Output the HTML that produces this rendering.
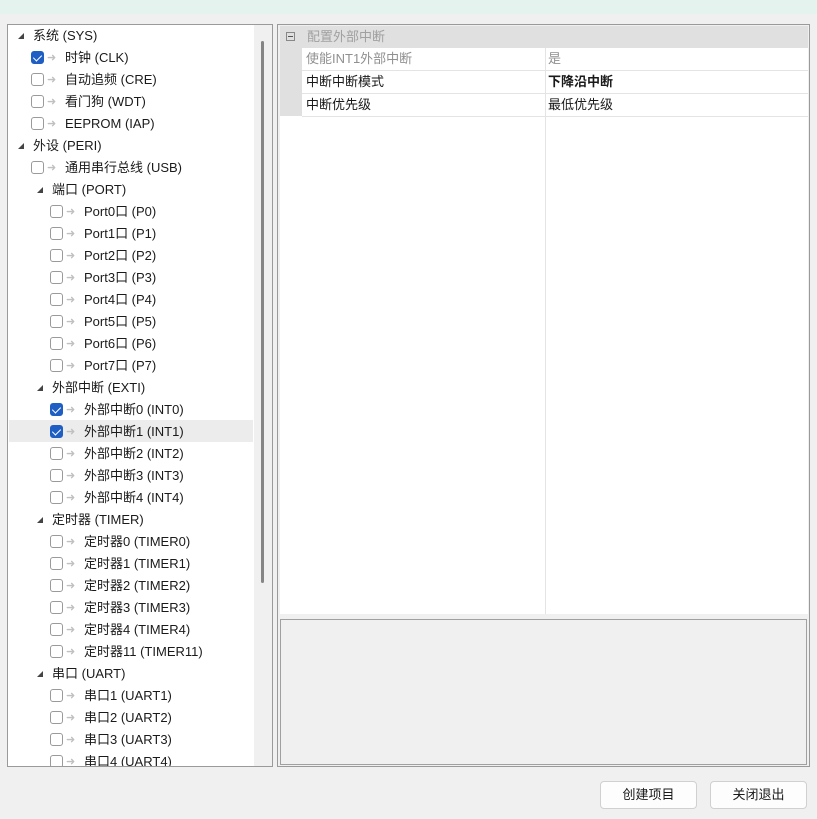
<!DOCTYPE html>
<html><head><meta charset="utf-8"><style>
*{margin:0;padding:0;box-sizing:border-box}
body{width:817px;height:819px;background:#f0f0f0;font-family:"Liberation Sans","Noto Sans CJK SC",sans-serif;font-size:13px;color:#1a1a1a;position:relative;overflow:hidden}
.title{position:absolute;left:0;top:0;width:817px;height:14px;background:#e5f3ef}
.lp{position:absolute;left:7px;top:24px;width:266px;height:743px;background:#fff;border:1px solid #9a9a9a;overflow:hidden}
.sb{position:absolute;left:246px;top:0;width:18px;height:741px;background:#f0f0f0}
.thumb{position:absolute;left:7px;top:16px;width:3px;height:542px;background:#858585;border-radius:2px}
.row{position:absolute;height:22px;line-height:22px;white-space:nowrap}
.sel{position:absolute;left:1px;width:244px;height:22px;background:#ececec}
.tri{position:absolute;width:0;height:0;border-left:6px solid transparent;border-bottom:6px solid #444;top:8px}
.cb{position:absolute;width:13px;height:13px;border:1px solid #9a9a9a;border-radius:3px;top:4px;background:#fff}
.cb.on{background:#1f5fc4;border-color:#1f5fc4}
.cb.on:after{content:"";position:absolute;left:3px;top:1px;width:4px;height:7px;border:solid #fff;border-width:0 1.5px 1.5px 0;transform:rotate(45deg)}
.ar{position:absolute;top:0;color:#c0c0c0;font-size:11px}
.rp{position:absolute;left:277px;top:24px;width:533px;height:743px;border:1px solid #9a9a9a;background:#f0f0f0}
.grid{position:absolute;left:2px;top:1px;width:528px;height:588px;background:#fff}
.hdr{position:absolute;left:0;top:0;width:528px;height:22px;background:#e0e0e0;color:#a0a0a0;line-height:22px}
.gut{position:absolute;left:0;top:22px;width:22px;height:68px;background:#e0e0e0}
.gr{position:absolute;left:22px;width:506px;height:23px;border-bottom:1px solid #e4e4e4;line-height:22px}
.vl{position:absolute;left:265px;top:22px;width:1px;height:566px;background:#e4e4e4}
.desc{position:absolute;left:2px;top:594px;width:527px;height:146px;border:1px solid #a0a0a0;background:#f0f0f0}
.btn{position:absolute;top:781px;height:28px;width:97px;background:#fdfdfd;border:1px solid #d0d0d0;border-radius:4px;text-align:center;line-height:26px}
</style></head><body>
<div class="title"></div>
<div class="lp">
<div class="sel" style="top:395px"></div>
<div id="tree"></div>
<div class="sb"><div class="thumb"></div></div>
</div>
<div class="rp">
<div class="grid">
<div class="hdr"><span style="position:absolute;left:6px;top:6px;width:9px;height:9px;border:1px solid #888;font-size:0"><span style="position:absolute;left:1px;top:3px;width:5px;height:1px;background:#555"></span></span><span style="position:absolute;left:27px">配置外部中断</span></div>
<div class="gut"></div>
<div class="vl"></div>
<div class="gr" style="top:22px;color:#909090"><span style="position:absolute;left:4px">使能INT1外部中断</span><span style="position:absolute;left:246px">是</span></div>
<div class="gr" style="top:45px"><span style="position:absolute;left:4px">中断中断模式</span><span style="position:absolute;left:246px;font-weight:bold">下降沿中断</span></div>
<div class="gr" style="top:68px"><span style="position:absolute;left:4px">中断优先级</span><span style="position:absolute;left:246px">最低优先级</span></div>
</div>
<div class="desc"></div>
</div>
<div class="btn" style="left:600px">创建项目</div>
<div class="btn" style="left:710px">关闭退出</div>
<script>
var items=[
[0,'t','系统 (SYS)'],[1,'c','时钟 (CLK)',1],[1,'c','自动追频 (CRE)'],[1,'c','看门狗 (WDT)'],[1,'c','EEPROM (IAP)'],
[0,'t','外设 (PERI)'],[1,'c','通用串行总线 (USB)'],[1,'t','端口 (PORT)'],
[2,'c','Port0口 (P0)'],[2,'c','Port1口 (P1)'],[2,'c','Port2口 (P2)'],[2,'c','Port3口 (P3)'],[2,'c','Port4口 (P4)'],[2,'c','Port5口 (P5)'],[2,'c','Port6口 (P6)'],[2,'c','Port7口 (P7)'],
[1,'t','外部中断 (EXTI)'],[2,'c','外部中断0 (INT0)',1],[2,'c','外部中断1 (INT1)',1],[2,'c','外部中断2 (INT2)'],[2,'c','外部中断3 (INT3)'],[2,'c','外部中断4 (INT4)'],
[1,'t','定时器 (TIMER)'],[2,'c','定时器0 (TIMER0)'],[2,'c','定时器1 (TIMER1)'],[2,'c','定时器2 (TIMER2)'],[2,'c','定时器3 (TIMER3)'],[2,'c','定时器4 (TIMER4)'],[2,'c','定时器11 (TIMER11)'],
[1,'t','串口 (UART)'],[2,'c','串口1 (UART1)'],[2,'c','串口2 (UART2)'],[2,'c','串口3 (UART3)'],[2,'c','串口4 (UART4)']];
var h='';
items.forEach(function(it,i){
 var top=i*22;var lv=it[0];var base=lv==0?0:(lv==1?0:19);
 if(it[1]=='t'){var tx=lv==0?10:29;
  h+='<div class="row" style="top:'+top+'px;left:0;width:240px"><span class="tri" style="left:'+tx+'px"></span><span style="position:absolute;left:'+(tx+15)+'px">'+it[2]+'</span></div>';
 }else{var cx=23+base;
  h+='<div class="row" style="top:'+top+'px;left:0;width:240px"><span class="cb'+(it[3]?' on':'')+'" style="left:'+cx+'px"></span><span class="ar" style="left:'+(cx+16)+'px">➜</span><span style="position:absolute;left:'+(cx+34)+'px">'+it[2]+'</span></div>';
 }});
document.getElementById('tree').innerHTML=h;
</script>
</body></html>
